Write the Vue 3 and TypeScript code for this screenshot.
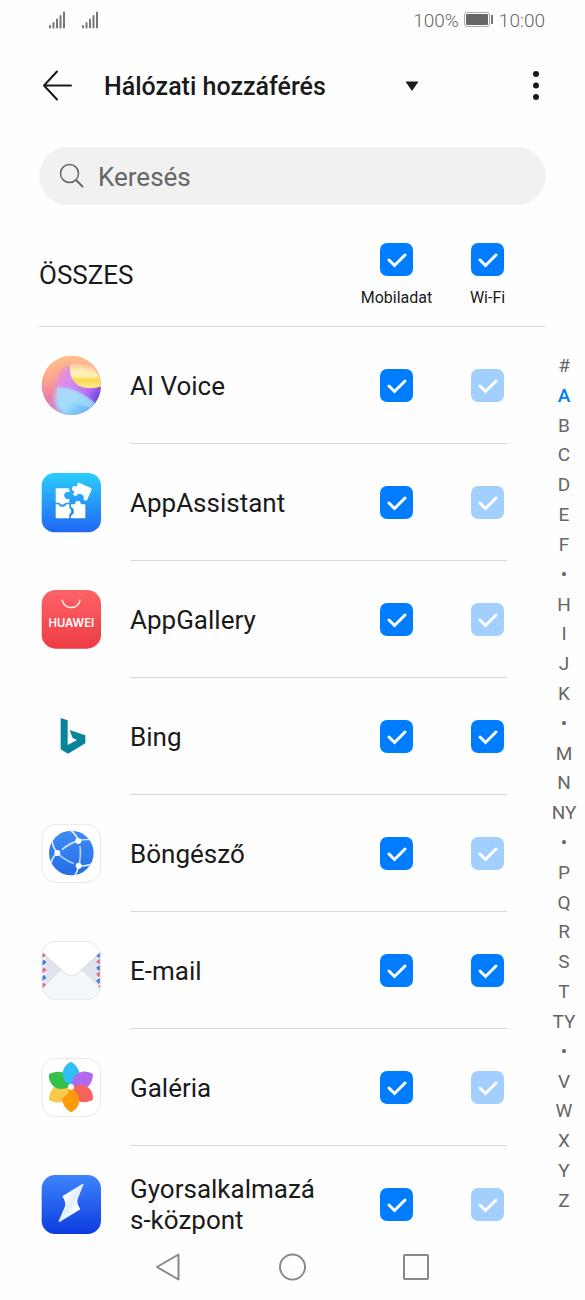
<script setup lang="ts">
import { computed, ref } from 'vue'

type IconName = 'voice' | 'assistant' | 'gallery-store' | 'bing' | 'browser' | 'email' | 'photos' | 'quick'

interface AppEntry {
  name: string
  icon: IconName
  mobile: boolean
  wifi: boolean
  wifiLocked: boolean
}

const apps = ref<AppEntry[]>([
  { name: 'AI Voice', icon: 'voice', mobile: true, wifi: true, wifiLocked: true },
  { name: 'AppAssistant', icon: 'assistant', mobile: true, wifi: true, wifiLocked: true },
  { name: 'AppGallery', icon: 'gallery-store', mobile: true, wifi: true, wifiLocked: true },
  { name: 'Bing', icon: 'bing', mobile: true, wifi: true, wifiLocked: false },
  { name: 'Böngésző', icon: 'browser', mobile: true, wifi: true, wifiLocked: true },
  { name: 'E-mail', icon: 'email', mobile: true, wifi: true, wifiLocked: false },
  { name: 'Galéria', icon: 'photos', mobile: true, wifi: true, wifiLocked: true },
  { name: 'Gyorsalkalmazás-központ', icon: 'quick', mobile: true, wifi: true, wifiLocked: true },
])

const allMobile = computed({
  get: () => apps.value.every((a) => a.mobile),
  set: (v: boolean) => apps.value.forEach((a) => (a.mobile = v)),
})

const allWifi = computed({
  get: () => apps.value.every((a) => a.wifi),
  set: (v: boolean) =>
    apps.value.forEach((a) => {
      if (!a.wifiLocked) a.wifi = v
    }),
})

const query = ref('')
const activeIndex = ref('A')
const indexKeys: string[] = '# A B C D E F • H I J K • M N NY • P Q R S T TY • V W X Y Z'.split(' ')

const petals = [
  { color: '#fbc94c', angle: 240 },
  { color: '#33c14a', angle: 300 },
  { color: '#2fbff6', angle: 0 },
  { color: '#b268ef', angle: 60 },
  { color: '#fa625c', angle: 120 },
  { color: '#fd9a0b', angle: 180 },
]
</script>

<template>
  <div class="screen">
    <div class="status">
      <div class="signals">
        <svg v-for="n in 2" :key="n" width="18" height="18" viewBox="0 0 18 18" aria-hidden="true">
          <path d="M2 15V16.500M5.500 12V16.500M9 8.500V16.500M12.500 5V16.500M16 1.500V16.500" stroke="#777" stroke-width="2" stroke-linecap="round" />
        </svg>
      </div>
      <div class="power">
        <span>100%</span>
        <svg width="30" height="18" viewBox="0 0 30 18" aria-hidden="true">
          <rect x="0.500" y="1.500" width="25" height="14" rx="2.500" fill="#fff" stroke="#aaa" />
          <rect x="2" y="3" width="22" height="11" rx="1" fill="#666" />
          <path d="M28 4V13" stroke="#777" stroke-width="2" />
        </svg>
        <span>10:00</span>
      </div>
    </div>

    <header class="bar">
      <button class="icon-button" type="button" aria-label="Vissza">
        <svg width="32" height="32" viewBox="0 0 32 32" fill="none" stroke="#1a1a1a" stroke-width="2" stroke-linecap="round" stroke-linejoin="round">
          <path d="M29 15.500H3M15 1.500L2 15.500L15 29.500" />
        </svg>
      </button>
      <div class="title">
        <select aria-label="Nézet">
          <option>Hálózati hozzáférés</option>
        </select>
        <svg class="caret" width="14" height="10" viewBox="0 0 14 10" aria-hidden="true"><path d="M0.500 0.500H13.500L7 10Z" fill="#1a1a1a" /></svg>
      </div>
      <button class="icon-button more" type="button" aria-label="Továbbiak">
        <svg width="8" height="32" viewBox="0 0 8 32" fill="#1a1a1a">
          <circle cx="4" cy="4" r="3" /><circle cx="4" cy="15.500" r="3" /><circle cx="4" cy="27" r="3" />
        </svg>
      </button>
    </header>

    <label class="search">
      <svg width="26" height="26" viewBox="0 0 26 26" fill="none" stroke="#666" stroke-linecap="round" aria-hidden="true">
        <circle cx="10.500" cy="10.500" r="9" stroke-width="1.500" />
        <path d="M17 17L23.500 23.500" stroke-width="2" />
      </svg>
      <input v-model="query" type="text" placeholder="Keresés" aria-label="Keresés" />
    </label>

    <section class="all">
      <h2>ÖSSZES</h2>
      <div class="checks">
        <label class="cell">
          <span class="check">
            <input v-model="allMobile" type="checkbox" />
            <svg viewBox="0 0 33 33" aria-hidden="true"><path d="M9 17L14.500 22.500L25 12" /></svg>
          </span>
          <span class="caption">Mobiladat</span>
        </label>
        <label class="cell">
          <span class="check">
            <input v-model="allWifi" type="checkbox" />
            <svg viewBox="0 0 33 33" aria-hidden="true"><path d="M9 17L14.500 22.500L25 12" /></svg>
          </span>
          <span class="caption">Wi-Fi</span>
        </label>
      </div>
    </section>

    <main class="content">
      <ul class="apps">
        <li v-for="app in apps" :key="app.name">
          <svg v-if="app.icon === 'voice'" class="app-icon" viewBox="34 47 180 180" aria-hidden="true">
            <defs>
              <linearGradient id="v-base" gradientUnits="userSpaceOnUse" x1="90" y1="50" x2="110" y2="225">
                <stop offset="0" stop-color="#ffbf88" /><stop offset="0.35" stop-color="#fba58c" /><stop offset="0.65" stop-color="#ec7fa8" /><stop offset="1" stop-color="#b98ae6" />
              </linearGradient>
              <linearGradient id="v-pink" gradientUnits="userSpaceOnUse" x1="85" y1="90" x2="215" y2="165">
                <stop offset="0" stop-color="#f092c4" /><stop offset="0.35" stop-color="#d58af8" /><stop offset="0.75" stop-color="#b868f6" /><stop offset="1" stop-color="#5a48dc" />
              </linearGradient>
              <linearGradient id="v-yellow" x1="0" y1="0" x2="0" y2="1">
                <stop offset="0" stop-color="#ffe0bc" /><stop offset="0.5" stop-color="#fff3b0" /><stop offset="0.65" stop-color="#fbd94f" /><stop offset="1" stop-color="#ffe88c" />
              </linearGradient>
              <linearGradient id="v-blue" gradientUnits="userSpaceOnUse" x1="80" y1="140" x2="165" y2="225">
                <stop offset="0" stop-color="#c3cdf7" /><stop offset="0.5" stop-color="#a0e0fb" /><stop offset="1" stop-color="#62b4f6" />
              </linearGradient>
              <filter id="v-soft" x="-20%" y="-20%" width="140%" height="140%"><feGaussianBlur stdDeviation="6" /></filter>
              <clipPath id="v-clip"><circle cx="125" cy="135" r="89" /></clipPath>
            </defs>
            <g clip-path="url(#v-clip)">
              <circle cx="125" cy="135" r="90" fill="url(#v-base)" />
              <path d="M128 70Q88 88 84 108L74 145Q110 190 215 200L225 170V130L150 115Z" fill="url(#v-pink)" filter="url(#v-soft)" />
              <path d="M82 145Q66 170 84 205Q110 240 150 228Q180 220 192 190Q140 142 82 145Z" fill="url(#v-blue)" filter="url(#v-soft)" />
              <path d="M82 140Q145 142 196 188L182 202Q130 185 88 180Z" fill="#a5dcfa" opacity="0.7" />
              <path d="M121 75Q150 64 188 80Q212 105 216 138Q180 150 147 136Q117 117 121 75Z" fill="url(#v-yellow)" />
              <path d="M128 44Q185 42 208 100Q180 72 122 80Q130 66 128 44Z" fill="#ffbb90" opacity="0.8" filter="url(#v-soft)" />
            </g>
          </svg>

          <svg v-else-if="app.icon === 'assistant'" class="app-icon" viewBox="34 38 180 180" aria-hidden="true">
            <defs>
              <linearGradient id="a-bg" x1="0" y1="0" x2="0" y2="1"><stop offset="0" stop-color="#2ccdfd" /><stop offset="1" stop-color="#1f66f4" /></linearGradient>
            </defs>
            <rect x="36" y="38" width="178" height="178" rx="38" fill="url(#a-bg)" />
            <g fill="#fff">
              <path d="M78 86Q78 84 80 84H117Q119 84 119 86V95A11 11 0 1 0 119 115V127H107A10 10 0 0 1 89 127H78Z" />
              <path d="M78 132H86A13 13 0 0 0 110 132H119V144A10 10 0 0 1 119 162V174H80Q78 174 78 172Z" />
              <path d="M124 132H137V129A8 8 0 1 1 153 129V132H167V172Q167 174 165 174H124V166A14 14 0 0 0 124 140Z" />
              <path d="M148 67L184 83Q187 85 186 88L172 120Q170 122 167 121L161 118A12 12 0 0 0 139 108L130 103L134 93A8 8 0 1 1 140 79L145 68Z" />
            </g>
          </svg>

          <svg v-else-if="app.icon === 'gallery-store'" class="app-icon" viewBox="34 45 180 180" aria-hidden="true">
            <defs>
              <linearGradient id="g-bg" x1="0" y1="0" x2="0" y2="1"><stop offset="0" stop-color="#fc6368" /><stop offset="1" stop-color="#ed3c45" /></linearGradient>
            </defs>
            <rect x="36" y="45" width="178" height="176" rx="42" fill="url(#g-bg)" />
            <path d="M98 76A27 27 0 0 0 151 76" fill="none" stroke="#ffe9ea" stroke-width="4.500" stroke-linecap="round" />
            <text x="125" y="157" text-anchor="middle" class="brand">HUAWEI</text>
          </svg>

          <svg v-else-if="app.icon === 'bing'" class="app-icon" viewBox="34 21 180 180" aria-hidden="true">
            <path d="M93 54L114 61V135L142 120L129 114L120 90L167 106V130L115 161L93 148Z" fill="#08839c" />
          </svg>

          <svg v-else-if="app.icon === 'browser'" class="app-icon" viewBox="34 42 180 180" aria-hidden="true">
            <defs>
              <linearGradient id="b-bg" x1="0" y1="0" x2="0" y2="1"><stop offset="0" stop-color="#3f8cf6" /><stop offset="1" stop-color="#246de6" /></linearGradient>
              <clipPath id="b-clip"><circle cx="125" cy="129" r="67" /></clipPath>
            </defs>
            <rect x="37" y="43" width="175" height="174" rx="40" fill="#fff" stroke="#e8e8e8" stroke-width="3" />
            <circle cx="125" cy="129" r="67" fill="url(#b-bg)" />
            <g clip-path="url(#b-clip)" fill="none" stroke-width="5" stroke-linecap="round">
              <path d="M98 118Q120 100 146 92Q172 86 194 90" stroke="#c9e0ff" />
              <path d="M146 92Q140 73 122 60M66 91Q70 112 82 129Q64 145 62 172M147 167Q172 171 194 158M147 167Q144 184 135 198" stroke="#e2eeff" />
              <path d="M83 129Q102 148 130 160M151 110Q155 140 147 167" stroke="#b7d5ff" />
            </g>
            <g fill="#fff"><circle cx="146" cy="93" r="9" /><circle cx="83" cy="129" r="9" /><circle cx="147" cy="167" r="9" /></g>
          </svg>

          <svg v-else-if="app.icon === 'email'" class="app-icon" viewBox="34 48 180 180" aria-hidden="true">
            <defs>
              <clipPath id="e-clip"><rect x="37" y="49" width="175" height="174" rx="40" /></clipPath>
              <filter id="e-shadow"><feDropShadow dx="0" dy="2" stdDeviation="2" flood-color="#8090a0" flood-opacity="0.35" /></filter>
            </defs>
            <g clip-path="url(#e-clip)">
              <rect x="35" y="45" width="180" height="180" fill="#dfe4ee" />
              <path d="M35 82H47V190H35ZM204 82H215V190H204Z" fill="#fff" />
              <g stroke-width="12">
                <path d="M33 96L47 85M33 142L47 131M33 188L47 177M203 114L217 103M203 152L217 141M203 192L217 181" stroke="#d8748f" />
                <path d="M33 119L47 108M33 165L47 154M203 95L217 84M203 133L217 122M203 172L217 161" stroke="#4c7fd6" />
              </g>
              <path d="M35 194L92 138H158L215 194V226H35Z" fill="#f4f8fa" />
              <path d="M35 45H215V78L145 143Q125 159 105 143L35 78Z" fill="#fff" filter="url(#e-shadow)" />
            </g>
            <rect x="37" y="49" width="175" height="174" rx="40" fill="none" stroke="#e8e8e8" stroke-width="3" />
          </svg>

          <svg v-else-if="app.icon === 'photos'" class="app-icon" viewBox="34 39 180 180" aria-hidden="true">
            <rect x="37" y="40" width="175" height="174" rx="40" fill="#fff" stroke="#e8e8e8" stroke-width="3" />
            <g transform="translate(124 126)">
              <path
                v-for="petal in petals"
                :key="petal.angle"
                d="M0 -76C16 -67 27 -50 26 -33C16 -31 7 -20 7 -3C-10 -6 -24 -20 -25 -40C-24 -57 -15 -69 0 -76Z"
                :fill="petal.color"
                :transform="`rotate(${petal.angle})`"
              />
              <circle r="9" fill="#fff" />
            </g>
          </svg>

          <svg v-else class="app-icon" viewBox="34 45 180 180" aria-hidden="true">
            <defs>
              <linearGradient id="q-bg" x1="0" y1="0" x2="0" y2="1"><stop offset="0" stop-color="#3d85fb" /><stop offset="1" stop-color="#0d3be0" /></linearGradient>
              <linearGradient id="q-bolt" x1="0" y1="0" x2="1" y2="1"><stop offset="0.3" stop-color="#fff" /><stop offset="0.5" stop-color="#dfeeff" /><stop offset="0.7" stop-color="#fff" /></linearGradient>
            </defs>
            <rect x="36" y="45" width="178" height="177" rx="40" fill="url(#q-bg)" />
            <path d="M162 72L144 118Q140 129 152 148L90 186Q86 187 87 183L106 139Q109 126 98 109L159 71Z" fill="url(#q-bolt)" />
          </svg>

          <div class="row">
            <span class="name">{{ app.name }}</span>
            <div class="checks">
              <span class="check">
                <input v-model="app.mobile" type="checkbox" :aria-label="`${app.name} – Mobiladat`" />
                <svg viewBox="0 0 33 33" aria-hidden="true"><path d="M9 17L14.500 22.500L25 12" /></svg>
              </span>
              <span class="check">
                <input v-model="app.wifi" type="checkbox" :disabled="app.wifiLocked" :aria-label="`${app.name} – Wi-Fi`" />
                <svg viewBox="0 0 33 33" aria-hidden="true"><path d="M9 17L14.500 22.500L25 12" /></svg>
              </span>
            </div>
          </div>
        </li>
      </ul>

      <nav class="index" aria-label="Betűrend">
        <a
          v-for="(key, i) in indexKeys"
          :key="i"
          :href="`#${key}`"
          :class="{ active: key === activeIndex }"
          @click.prevent="activeIndex = key"
        >{{ key }}</a>
      </nav>
    </main>

    <footer class="system-nav">
      <button type="button" aria-label="Vissza">
        <svg viewBox="0 0 30 30"><path d="M3 15L24.500 2.500V27.500Z" /></svg>
      </button>
      <button type="button" aria-label="Kezdőképernyő">
        <svg viewBox="0 0 30 30"><circle cx="14.500" cy="15" r="12.500" /></svg>
      </button>
      <button type="button" aria-label="Legutóbbiak">
        <svg viewBox="0 0 30 30"><rect x="2" y="3" width="24" height="24" rx="1" /></svg>
      </button>
    </footer>
  </div>
</template>

<style>
body {
  margin: 0;
  background: #fefefe;
}
</style>

<style scoped>
.screen {
  display: flex;
  flex-direction: column;
  height: 100vh;
  background: #fefefe;
  color: #1a1a1a;
  font-family: Roboto, "Noto Sans", sans-serif;
}

button {
  padding: 0;
  border: 0;
  background: none;
}

svg {
  display: block;
}

.status {
  display: flex;
  justify-content: space-between;
  align-items: center;
  height: 40px;
  padding: 0 40px 0 48px;
  color: #666;
  font-size: 19px;
  font-weight: 300;
}

.signals {
  display: flex;
  gap: 15px;
}

.power {
  display: flex;
  align-items: center;
  gap: 5px;
}

.bar {
  display: flex;
  align-items: center;
  height: 92px;
  padding: 0 45px 0 42px;
}

.title {
  display: grid;
  grid-template-columns: 1fr;
  align-items: center;
  flex: 1;
  max-width: 315px;
  margin-left: 30px;
}

.title select,
.title .caret {
  grid-area: 1 / 1;
}

.title select {
  width: 100%;
  height: 40px;
  padding: 0;
  border: 0;
  appearance: none;
  background: none;
  color: #1a1a1a;
  font: 500 25px Roboto, "Noto Sans", sans-serif;
}

.title .caret {
  justify-self: end;
  pointer-events: none;
}

.more {
  margin-left: auto;
}

.search {
  display: flex;
  flex: none;
  align-items: center;
  gap: 13px;
  height: 58px;
  margin: 15px 39px 0;
  padding: 0 20px;
  box-sizing: border-box;
  border-radius: 29px;
  background: #f1f1f1;
}

.search input {
  flex: 1;
  min-width: 0;
  padding: 1px 0 0;
  border: 0;
  outline: 0;
  background: none;
  color: #1a1a1a;
  font: 26px Roboto, "Noto Sans", sans-serif;
}

.search input::placeholder {
  color: #666;
  opacity: 1;
}

.all {
  display: flex;
  justify-content: space-between;
  align-items: center;
  flex: none;
  height: 122px;
  margin: 0 39px;
  padding-right: 42px;
  box-sizing: border-box;
  border-bottom: 1px solid #d8d8d8;
}

.all h2 {
  margin: 18px 0 0;
  font-size: 26px;
  font-weight: 400;
}

.all .checks {
  align-self: flex-start;
  padding-top: 38px;
}

.checks {
  display: flex;
  gap: 58px;
}

.cell {
  display: flex;
  flex-direction: column;
  align-items: center;
  gap: 12px;
  width: 33px;
}

.caption {
  font-size: 16px;
  line-height: 20px;
  white-space: nowrap;
}

.check {
  display: grid;
  width: 33px;
  height: 33px;
}

.check input,
.check svg {
  grid-area: 1 / 1;
}

.check input {
  width: 33px;
  height: 33px;
  margin: 0;
  appearance: none;
  border: 2px solid #999;
  border-radius: 7px;
}

.check input:checked {
  border: 0;
  background: #007dff;
}

.check input:checked:disabled {
  background: #a3cfff;
}

.check svg {
  width: 33px;
  height: 33px;
  fill: none;
  stroke: #fff;
  stroke-width: 3;
  stroke-linecap: round;
  stroke-linejoin: miter;
  pointer-events: none;
  visibility: hidden;
}

.check input:checked + svg {
  visibility: visible;
}

.content {
  display: flex;
  flex: 1;
  min-height: 0;
}

.apps {
  flex: 1;
  min-width: 0;
  margin: 0;
  padding: 0 36px 0 41px;
  overflow-y: auto;
  scrollbar-width: none;
  list-style: none;
}

.apps li {
  display: flex;
  align-items: center;
  gap: 29px;
}

.app-icon {
  flex: none;
  width: 60px;
  height: 60px;
}

.brand {
  fill: #fff;
  font: 600 34px Inter, sans-serif;
}

.row {
  display: flex;
  flex: 1;
  justify-content: space-between;
  align-items: center;
  height: 117px;
  padding-right: 3px;
  box-sizing: border-box;
  border-bottom: 1px solid #d8d8d8;
}

.name {
  flex: 1;
  margin-right: 56px;
  padding-top: 2px;
  font-size: 26px;
  line-height: 31px;
  overflow-wrap: anywhere;
}

.index {
  display: flex;
  flex-direction: column;
  justify-content: space-between;
  width: 42px;
  padding: 24px 0 20px;
}

.index a {
  color: #666;
  font-size: 19px;
  line-height: 29px;
  text-align: center;
  text-decoration: none;
}

.index .active {
  color: #007dff;
  font-weight: 500;
}

.system-nav {
  display: flex;
  justify-content: center;
  align-items: center;
  flex: none;
  gap: 94px;
  height: 65px;
  padding-bottom: 1px;
  box-sizing: border-box;
}

.system-nav svg {
  width: 30px;
  height: 30px;
  fill: none;
  stroke: #888;
  stroke-width: 2;
  stroke-linejoin: round;
}
</style>
